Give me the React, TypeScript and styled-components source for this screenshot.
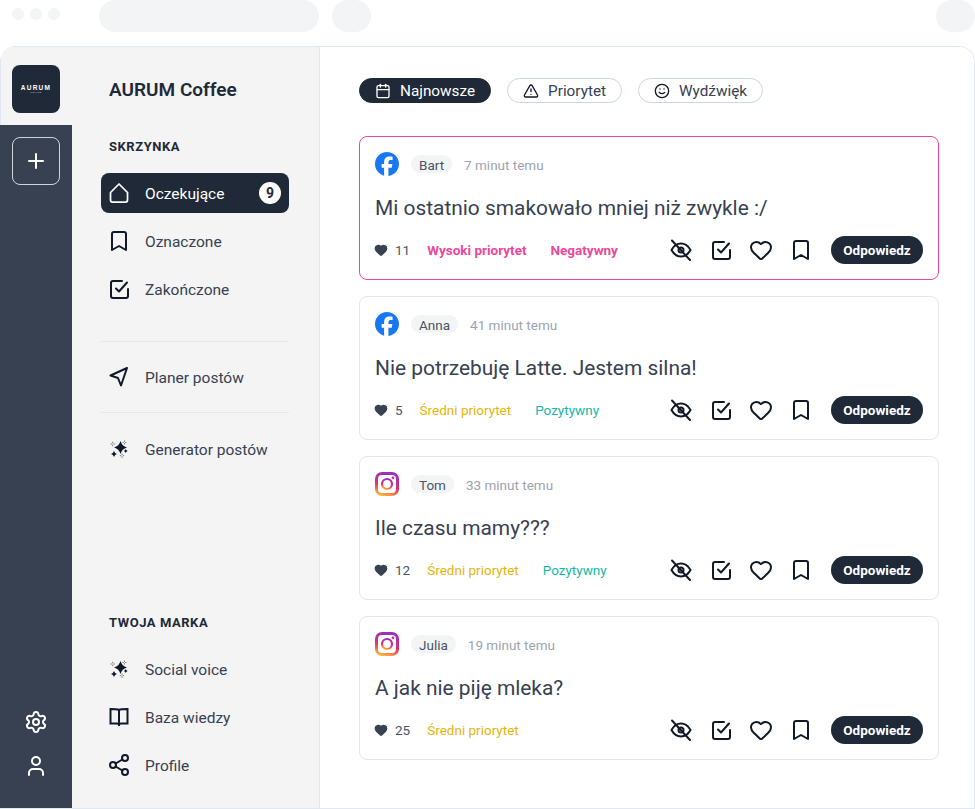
import React from 'react';
import styled, { createGlobalStyle } from 'styled-components';
import {
  Bookmark,
  Calendar,
  Heart,
  Plus,
  Settings,
  Share2,
  Smile,
  TriangleAlert,
  User,
} from 'lucide-react';
import { SiFacebook } from 'react-icons/si';

const GlobalStyle = createGlobalStyle`
  html, body {
    margin: 0;
    background: #fff;
    font-family: Roboto, 'Liberation Sans', sans-serif;
    color: #374151;
  }
  * { box-sizing: border-box; }
`;

const Page = styled.div`
  width: 975px;
  height: 809px;
  display: flex;
  flex-direction: column;
  overflow: hidden;
`;

const TopBar = styled.div`
  height: 46px;
  display: flex;
  align-items: flex-start;
`;

const Dots = styled.div`
  display: flex;
  gap: 6px;
  padding: 8px 0 0 12px;
  width: 99px;
`;

const Dot = styled.span`
  width: 12px;
  height: 12px;
  border-radius: 50%;
  background: #f3f4f6;
`;

const Placeholder = styled.div<{ $width: number }>`
  width: ${({ $width }) => $width}px;
  height: 32px;
  background: #f3f4f6;
  border-radius: 16px;
  margin-right: 13px;

  &:last-child {
    margin: 0 0 0 auto;
  }
`;

const Frame = styled.div`
  flex: 1;
  display: flex;
  border: 1px solid #e2e8f0;
  border-left: none;
  border-radius: 16px 16px 0 0;
  overflow: hidden;
`;

const Rail = styled.aside`
  width: 72px;
  display: flex;
  flex-direction: column;
  flex-shrink: 0;
`;

const RailTop = styled.div`
  height: 78px;
  background: #f4f4f5;
  border-left: 1px solid #e2e8f0;
  padding: 18px 0 0 11px;
`;

const LogoTile = styled.div`
  width: 48px;
  height: 48px;
  border-radius: 8px;
  background: #1f2937;
  color: #fff;
  display: flex;
  flex-direction: column;
  align-items: center;
  justify-content: center;
`;

const LogoWord = styled.span`
  font-family: 'Liberation Sans', sans-serif;
  font-size: 6.5px;
  line-height: 6px;
  font-weight: 700;
  letter-spacing: 1.3px;
`;

const LogoSub = styled.span`
  font-family: 'Liberation Sans', sans-serif;
  font-size: 2px;
  line-height: 3px;
  letter-spacing: 0.6px;
  color: #d1d5db;
`;

const RailBody = styled.div`
  flex: 1;
  background: #374151;
  padding: 12px 12px 30px;
  display: flex;
  flex-direction: column;
  align-items: center;
  gap: 20px;
  color: #fff;
`;

const AddButton = styled.button`
  width: 48px;
  height: 48px;
  padding: 0;
  margin-bottom: auto;
  display: flex;
  align-items: center;
  justify-content: center;
  background: transparent;
  color: #fff;
  border: 1px solid #d1d5db;
  border-radius: 8px;
`;

const Sidebar = styled.nav`
  width: 248px;
  flex-shrink: 0;
  background: #f4f4f5;
  border-right: 1px solid #e5e7eb;
  padding: 31px 30px 23px 29px;
  display: flex;
  flex-direction: column;
`;

const BrandName = styled.h1`
  margin: 0 0 36px 8px;
  font-size: 19px;
  line-height: 24px;
  font-weight: 600;
  color: #1f2937;
`;

const SectionLabel = styled.h2<{ $pushed?: boolean }>`
  margin: ${({ $pushed }) => ($pushed ? 'auto' : '0')} 0 19px 8px;
  padding-top: 2px;
  font-size: 13px;
  line-height: 14px;
  font-weight: 700;
  letter-spacing: 0.55px;
  color: #1f2937;
`;

const NavList = styled.div`
  display: flex;
  flex-direction: column;
  gap: 8px;
`;

const NavItem = styled.a<{ $active?: boolean }>`
  height: 40px;
  display: flex;
  align-items: center;
  gap: 14px;
  padding: 0 8px 0 6px;
  border-radius: 8px;
  font-size: 15.5px;
  background: ${({ $active }) => ($active ? '#1f2937' : 'transparent')};
  color: ${({ $active }) => ($active ? '#fff' : '#374151')};

  svg {
    flex-shrink: 0;
    color: ${({ $active }) => ($active ? '#fff' : '#111827')};
  }
`;

const NavText = styled.span`
  padding-top: 1px;
`;

const Count = styled.span`
  margin-left: auto;
  width: 22px;
  height: 22px;
  border-radius: 50%;
  background: #fff;
  color: #1f2937;
  font-size: 14px;
  font-weight: 700;
  display: flex;
  align-items: center;
  justify-content: center;
`;

const Divider = styled.hr<{ $first?: boolean }>`
  width: 100%;
  height: 1px;
  border: none;
  background: #e5e7eb;
  margin: ${({ $first }) => ($first ? '32px 0 15px' : '15px 0 16px')};
`;

const Main = styled.main`
  flex: 1;
  padding: 31px 35px 0 39px;
  background: #fff;
`;

const Filters = styled.div`
  display: flex;
  gap: 16px;
  margin-bottom: 33px;
`;

const Chip = styled.button<{ $active?: boolean }>`
  height: 25px;
  display: flex;
  align-items: center;
  gap: 9px;
  padding: 0 15px;
  border-radius: 13px;
  font-family: inherit;
  font-size: 15.3px;
  border: 1px solid ${({ $active }) => ($active ? '#1f2937' : '#cbd5e1')};
  background: ${({ $active }) => ($active ? '#1f2937' : '#fff')};
  color: ${({ $active }) => ($active ? '#fff' : '#374151')};

  svg {
    color: ${({ $active }) => ($active ? '#fff' : '#111827')};
  }
`;

const Feed = styled.div`
  display: flex;
  flex-direction: column;
  gap: 16px;
`;

const Card = styled.article<{ $urgent?: boolean }>`
  height: 144px;
  padding: 15px;
  border-radius: 8px;
  border: 1px solid ${({ $urgent }) => ($urgent ? '#ec4899' : '#e5e7eb')};
  display: flex;
  flex-direction: column;
`;

const CardHead = styled.div`
  display: flex;
  align-items: center;
  height: 24px;
`;

const Author = styled.span`
  margin-left: 12px;
  padding: 1px 8px 0;
  height: 18px;
  display: flex;
  align-items: center;
  border-radius: 9px;
  background: #f3f4f6;
  font-size: 13.5px;
  color: #4b5563;
`;

const Time = styled.span`
  margin-left: 12px;
  padding-top: 1px;
  font-size: 13.5px;
  color: #9ca3af;
`;

const Message = styled.p`
  margin: 16px 0 0;
  font-size: 20.9px;
  line-height: 32px;
  color: #374151;
`;

const CardFoot = styled.div`
  margin-top: auto;
  display: flex;
  align-items: center;
  height: 28px;
`;

const Likes = styled.span`
  display: flex;
  align-items: center;
  gap: 7px;
  margin: 0 17px 0 -1px;
  font-size: 13.5px;
  color: #4b5563;
`;

const toneColors = { high: '#ec4899', medium: '#eab308', good: '#14b8a6' };

const Tag = styled.span<{ $tone: keyof typeof toneColors }>`
  margin-right: 24px;
  font-size: 13.5px;
  font-weight: ${({ $tone }) => ($tone === 'high' ? 700 : 400)};
  color: ${({ $tone }) => toneColors[$tone]};
`;

const Actions = styled.div`
  margin-left: auto;
  display: flex;
  align-items: center;
  gap: 16px;
  color: #111827;
`;

const ReplyButton = styled.button`
  height: 28px;
  width: 92px;
  margin-left: 2px;
  padding: 0;
  border: none;
  border-radius: 14px;
  background: #1f2937;
  color: #fff;
  font-family: inherit;
  font-size: 13.5px;
  font-weight: 700;
`;

const outline = {
  width: 24,
  height: 24,
  viewBox: '0 0 24 24',
  fill: 'none',
  stroke: 'currentColor',
  strokeWidth: 2,
  strokeLinecap: 'round',
  strokeLinejoin: 'round',
} as const;

const HomeIcon = () => (
  <svg {...outline} strokeWidth={1.75}>
    <path d="M3.500 11.500 12 3l8.500 8.500V19a2 2 0 0 1-2 2h-13a2 2 0 0 1-2-2z" />
  </svg>
);

const CheckSquareIcon = () => (
  <svg {...outline}>
    <path d="M15 4H6a2 2 0 0 0-2 2v13a2 2 0 0 0 2 2h13a2 2 0 0 0 2-2v-7" />
    <path d="m9 11.500 3 3 8-9" />
  </svg>
);

const PlaneIcon = () => (
  <svg {...outline}>
    <path d="M20 3 3.500 10.500 11 13l3 7.500z" />
  </svg>
);

const BookIcon = () => (
  <svg {...outline} strokeLinecap="butt" strokeLinejoin="miter">
    <path d="M12 5c-2-1-5-1-8.500-1v14.500H10c1 0 2 .5 2 1.500 0-1 1-1.500 2-1.500h6.500V4C17 4 14 4 12 5z" />
    <path d="M12 5v16" />
  </svg>
);

const EyeOffIcon = () => (
  <svg {...outline}>
    <path d="M2.500 12C5 7.500 8.500 5.500 12 5.500s7 2 9.500 6.500c-2.500 4.500-6 6.500-9.500 6.500S5 16.500 2.500 12z" />
    <circle cx="12" cy="12" r="2.500" />
    <path d="M3 2.500 21 22" />
  </svg>
);

// four-pointed star centred on (x, y)
const star = (x: number, y: number, r: number) => {
  const k = r * 0.22;
  return `M${x} ${y - r}Q${x + k} ${y - k} ${x + r} ${y}Q${x + k} ${y + k} ${x} ${y + r}Q${x - k} ${y + k} ${x - r} ${y}Q${x - k} ${y - k} ${x} ${y - r}z`;
};

// thin plus-shaped twinkle with an open centre
const twinkle = (x: number, y: number, r: number) =>
  `M${x} ${y - r}v${r * 0.7}M${x} ${y + r}v${-r * 0.7}M${x - r} ${y}h${r * 0.7}M${x + r} ${y}h${-r * 0.7}`;

const SparkIcon = () => (
  <svg width="24" height="24" viewBox="0 0 24 24" fill="currentColor">
    <path d={star(13.5, 10.5, 6.5)} />
    <path d={star(7, 17, 3)} />
    <path d={star(18.7, 14, 2)} />
    <g stroke="currentColor" strokeWidth="0.7" fill="none" opacity="0.75">
      <path d={twinkle(5.7, 7, 2.2)} />
      <path d={twinkle(17.5, 5.5, 2)} />
      <path d={twinkle(15, 18.7, 2.2)} />
    </g>
  </svg>
);

const InstagramIcon = () => (
  <svg width="24" height="24" viewBox="0 0 24 24" fill="none">
    <defs>
      <linearGradient id="insta" x1="0.2" y1="1" x2="0.5" y2="0">
        <stop offset="0" stopColor="#fbb040" />
        <stop offset="0.45" stopColor="#e1306c" />
        <stop offset="1" stopColor="#9b2fc4" />
      </linearGradient>
    </defs>
    <rect x="1.500" y="1.500" width="21" height="21" rx="5.500" stroke="url(#insta)" strokeWidth="3" />
    <circle cx="12" cy="12" r="5" stroke="url(#insta)" strokeWidth="2.200" />
    <circle cx="18" cy="6" r="1.400" fill="url(#insta)" />
  </svg>
);

type Post = {
  platform: 'facebook' | 'instagram';
  author: string;
  time: string;
  text: string;
  likes: number;
  urgent?: boolean;
  tags: { label: string; tone: keyof typeof toneColors }[];
};

const posts: Post[] = [
  {
    platform: 'facebook',
    author: 'Bart',
    time: '7 minut temu',
    text: 'Mi ostatnio smakowało mniej niż zwykle :/',
    likes: 11,
    urgent: true,
    tags: [
      { label: 'Wysoki priorytet', tone: 'high' },
      { label: 'Negatywny', tone: 'high' },
    ],
  },
  {
    platform: 'facebook',
    author: 'Anna',
    time: '41 minut temu',
    text: 'Nie potrzebuję Latte. Jestem silna!',
    likes: 5,
    tags: [
      { label: 'Średni priorytet', tone: 'medium' },
      { label: 'Pozytywny', tone: 'good' },
    ],
  },
  {
    platform: 'instagram',
    author: 'Tom',
    time: '33 minut temu',
    text: 'Ile czasu mamy???',
    likes: 12,
    tags: [
      { label: 'Średni priorytet', tone: 'medium' },
      { label: 'Pozytywny', tone: 'good' },
    ],
  },
  {
    platform: 'instagram',
    author: 'Julia',
    time: '19 minut temu',
    text: 'A jak nie piję mleka?',
    likes: 25,
    tags: [{ label: 'Średni priorytet', tone: 'medium' }],
  },
];

const App = () => (
  <Page>
    <GlobalStyle />
    <TopBar>
      <Dots>
        <Dot />
        <Dot />
        <Dot />
      </Dots>
      <Placeholder $width={220} />
      <Placeholder $width={39} />
      <Placeholder $width={39} />
    </TopBar>
    <Frame>
      <Rail>
        <RailTop>
          <LogoTile>
            <LogoWord>AURUM</LogoWord>
            <LogoSub>COFFEE</LogoSub>
          </LogoTile>
        </RailTop>
        <RailBody>
          <AddButton>
            <Plus size={24} />
          </AddButton>
          <Settings size={24} />
          <User size={24} />
        </RailBody>
      </Rail>
      <Sidebar>
        <BrandName>AURUM Coffee</BrandName>
        <SectionLabel>SKRZYNKA</SectionLabel>
        <NavList>
          <NavItem $active>
            <HomeIcon />
            <NavText>Oczekujące</NavText>
            <Count>9</Count>
          </NavItem>
          <NavItem>
            <Bookmark size={24} />
            <NavText>Oznaczone</NavText>
          </NavItem>
          <NavItem>
            <CheckSquareIcon />
            <NavText>Zakończone</NavText>
          </NavItem>
        </NavList>
        <Divider $first />
        <NavItem>
          <PlaneIcon />
          <NavText>Planer postów</NavText>
        </NavItem>
        <Divider />
        <NavItem>
          <SparkIcon />
          <NavText>Generator postów</NavText>
        </NavItem>
        <SectionLabel $pushed>TWOJA MARKA</SectionLabel>
        <NavList>
          <NavItem>
            <SparkIcon />
            <NavText>Social voice</NavText>
          </NavItem>
          <NavItem>
            <BookIcon />
            <NavText>Baza wiedzy</NavText>
          </NavItem>
          <NavItem>
            <Share2 size={24} />
            <NavText>Profile</NavText>
          </NavItem>
        </NavList>
      </Sidebar>
      <Main>
        <Filters>
          <Chip $active>
            <Calendar size={16} />
            Najnowsze
          </Chip>
          <Chip>
            <TriangleAlert size={16} />
            Priorytet
          </Chip>
          <Chip>
            <Smile size={16} />
            Wydźwięk
          </Chip>
        </Filters>
        <Feed>
          {posts.map((post) => (
            <Card key={post.author} $urgent={post.urgent}>
              <CardHead>
                {post.platform === 'facebook' ? (
                  <SiFacebook size={24} color="#1877f2" />
                ) : (
                  <InstagramIcon />
                )}
                <Author>{post.author}</Author>
                <Time>{post.time}</Time>
              </CardHead>
              <Message>{post.text}</Message>
              <CardFoot>
                <Likes>
                  <Heart size={14} fill="#374151" color="#374151" />
                  {post.likes}
                </Likes>
                {post.tags.map((tag) => (
                  <Tag key={tag.label} $tone={tag.tone}>
                    {tag.label}
                  </Tag>
                ))}
                <Actions>
                  <EyeOffIcon />
                  <CheckSquareIcon />
                  <Heart size={24} />
                  <Bookmark size={24} />
                  <ReplyButton>Odpowiedz</ReplyButton>
                </Actions>
              </CardFoot>
            </Card>
          ))}
        </Feed>
      </Main>
    </Frame>
  </Page>
);

export default App;
